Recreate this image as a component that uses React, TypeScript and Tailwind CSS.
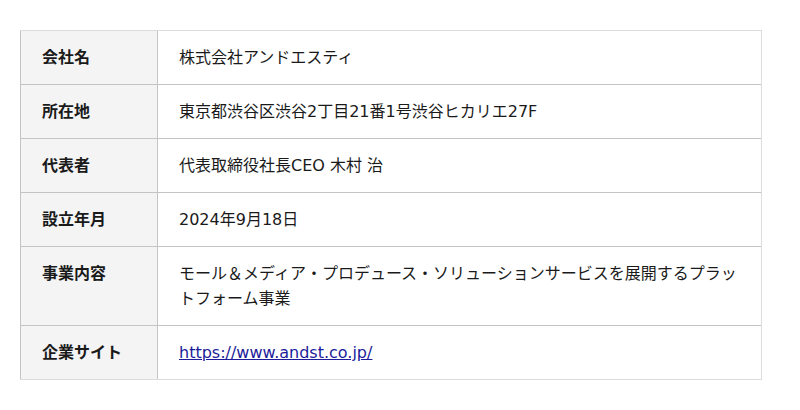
import React from "react";

const rows: { label: string; value: React.ReactNode }[] = [
  { label: "会社名", value: "株式会社アンドエスティ" },
  { label: "所在地", value: "東京都渋谷区渋谷2丁目21番1号渋谷ヒカリエ27F" },
  { label: "代表者", value: "代表取締役社長CEO 木村 治" },
  { label: "設立年月", value: "2024年9月18日" },
  {
    label: "事業内容",
    value: "モール＆メディア・プロデュース・ソリューションサービスを展開するプラットフォーム事業",
  },
  {
    label: "企業サイト",
    value: (
      <a href="#" className="underline text-[#1c1c9a]">
        https://www.andst.co.jp/
      </a>
    ),
  },
];

export default function App() {
  return (
    <div
      className="w-[800px] h-[410px] bg-white pt-[30px] pl-[20px] text-[16px] leading-[25px] text-[#1a1a1a]"
      style={{ fontFamily: '"DejaVu Sans", "Noto Sans CJK JP", sans-serif' }}
    >
      <div className="w-[742px] border-t border-r border-b border-[#dcdcdc]">
        {rows.map((r, i) => (
          <div
            key={i}
            className={`flex ${i < rows.length - 1 ? "border-b border-[#c4c4c4]" : ""}`}
          >
            <div className="w-[138px] shrink-0 bg-[#f4f4f4] border-l border-r border-[#c4c4c4] pl-[21px] py-[14px] font-bold">
              {r.label}
            </div>
            <div className="flex-1 pl-[21px] pr-[20px] py-[14px]">{r.value}</div>
          </div>
        ))}
      </div>
    </div>
  );
}
